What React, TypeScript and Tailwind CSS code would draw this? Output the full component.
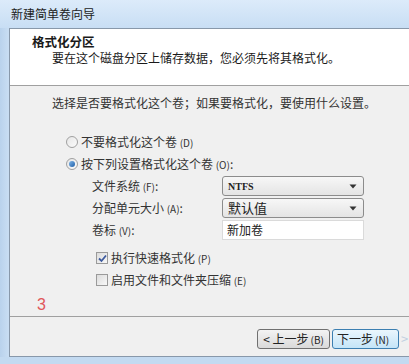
const font = "font-['Microsoft_YaHei','Noto_Sans_CJK_SC',sans-serif]";

function Radio({ checked }: { checked?: boolean }) {
  return (
    <span className="w-[12px] h-[12px] rounded-full border border-[#a0a0a0] bg-gradient-to-br from-[#e6e6e6] to-[#fbfbfb] flex items-center justify-center shrink-0">
      {checked && (
        <span className="w-[6px] h-[6px] rounded-full bg-gradient-to-br from-[#7fb6e8] to-[#1d5fa8]" />
      )}
    </span>
  );
}

function Checkbox({ checked }: { checked?: boolean }) {
  return (
    <span className="w-[12px] h-[12px] border border-[#9a9a9a] bg-gradient-to-br from-[#dcdcdc] to-[#f8f8f8] flex items-center justify-center shrink-0">
      {checked && (
        <svg width="9" height="9" viewBox="0 0 9 9">
          <path d="M1 4.5 L3.5 7 L8 1.5" fill="none" stroke="#3d5a9e" strokeWidth="1.8" />
        </svg>
      )}
    </span>
  );
}

function Select({ children }: { children: React.ReactNode }) {
  return (
    <div className="w-[142px] h-[20px] rounded-[3px] border border-[#8c8c8c] bg-gradient-to-b from-[#f7f7f7] to-[#e4e4e4] flex items-center justify-between pl-[5px] pr-[6px]">
      {children}
      <svg width="8" height="5" viewBox="0 0 8 5">
        <path d="M0.5 0.5 L7.5 0.5 L4 4.5 Z" fill="#333" />
      </svg>
    </div>
  );
}

export default function App() {
  return (
    <div className={`w-[409px] h-[364px] overflow-hidden bg-[#c3daf1] flex flex-col ${font}`}>
      {/* Title bar */}
      <div className="h-[28px] shrink-0 bg-gradient-to-b from-[#dcebfa] to-[#c8def4] flex items-center pl-[11px] text-[12px] text-[#222]">
        新建简单卷向导
      </div>

      <div className="flex-1 flex min-h-0">
        <div className="w-[9px] shrink-0 bg-gradient-to-r from-[#b9d2ec] to-[#c9def3]" />
        <div className="flex-1 flex flex-col border-l border-t border-b border-[#8898aa] bg-[#f0f0f0]">
          {/* Header */}
          <div className="h-[57px] shrink-0 bg-white border-b border-[#a0a0a0] pl-[22px] pt-[4px] text-[#1a1a1a]">
            <div className="text-[12.5px] font-bold leading-[17px]">格式化分区</div>
            <div className="text-[12px] leading-[16px] pl-[20px]">要在这个磁盘分区上储存数据，您必须先将其格式化。</div>
          </div>

          {/* Body */}
          <div className="flex-1 pl-[42px] pt-[9px] text-[#333] text-[12px]">
            <div className="leading-[16px]">选择是否要格式化这个卷；如果要格式化，要使用什么设置。</div>

            <div className="mt-[20px] ml-[14px]">
              <div className="h-[22px] flex items-center gap-[3px]">
                <Radio />
                <span>不要格式化这个卷 <span className="text-[10px]">(D)</span></span>
              </div>
              <div className="h-[22px] flex items-center gap-[3px]">
                <Radio checked />
                <span>按下列设置格式化这个卷 <span className="text-[10px]">(O)</span>:</span>
              </div>

              {/* Format settings */}
              <div className="grid grid-cols-[26px_130px_142px] auto-rows-[22px] items-center">
                <span />
                <span className="whitespace-nowrap">文件系统 <span className="text-[10px]">(F)</span>:</span>
                <Select>
                  <span className="font-['Liberation_Serif',serif] font-bold text-[10px] text-[#222]">NTFS</span>
                </Select>
                <span />
                <span className="whitespace-nowrap">分配单元大小 <span className="text-[10px]">(A)</span>:</span>
                <Select>
                  <span className="text-[13px] text-[#222]">默认值</span>
                </Select>
                <span />
                <span className="whitespace-nowrap">卷标 <span className="text-[10px]">(V)</span>:</span>
                <div className="h-[20px] border border-[#dadada] bg-white flex items-center pl-[4px] text-[#222]">
                  新加卷
                </div>
              </div>

              <div className="mt-[6px] ml-[30px]">
                <div className="h-[22px] flex items-center gap-[3px]">
                  <Checkbox checked />
                  <span>执行快速格式化 <span className="text-[10px]">(P)</span></span>
                </div>
                <div className="h-[22px] flex items-center gap-[3px]">
                  <Checkbox />
                  <span>启用文件和文件夹压缩 <span className="text-[10px]">(E)</span></span>
                </div>
              </div>
            </div>
          </div>

          <div className="h-[22px] shrink-0 pl-[27px] flex items-center font-['Liberation_Sans',sans-serif] text-[16px] text-[#e0575a]">
            3
          </div>

          {/* Footer */}
          <div className="h-[40px] shrink-0 border-t border-[#a0a0a0] flex items-start pt-[12px] pl-[247px] gap-[2px] text-[12px] text-[#222]">
            <div className="w-[73px] h-[20px] rounded-[3px] border border-[#707070] bg-gradient-to-b from-[#f3f3f3] to-[#dadada] flex items-center justify-center whitespace-nowrap">
              &lt; 上一步 <span className="text-[10px] ml-[2px]">(B)</span>
            </div>
            <div className="w-[67px] h-[20px] rounded-[3px] border border-[#3c7fb1] bg-gradient-to-b from-[#eaf6fd] to-[#c4e5f8] flex items-center pl-[4px] whitespace-nowrap">
              下一步 <span className="text-[10px] ml-[2px]">(N)</span>
            </div>
            <div className="text-[#c0cfe0] text-[13px] leading-[20px] whitespace-nowrap">&gt;</div>
          </div>
        </div>
      </div>

      <div className="h-[7px] shrink-0" />
    </div>
  );
}
